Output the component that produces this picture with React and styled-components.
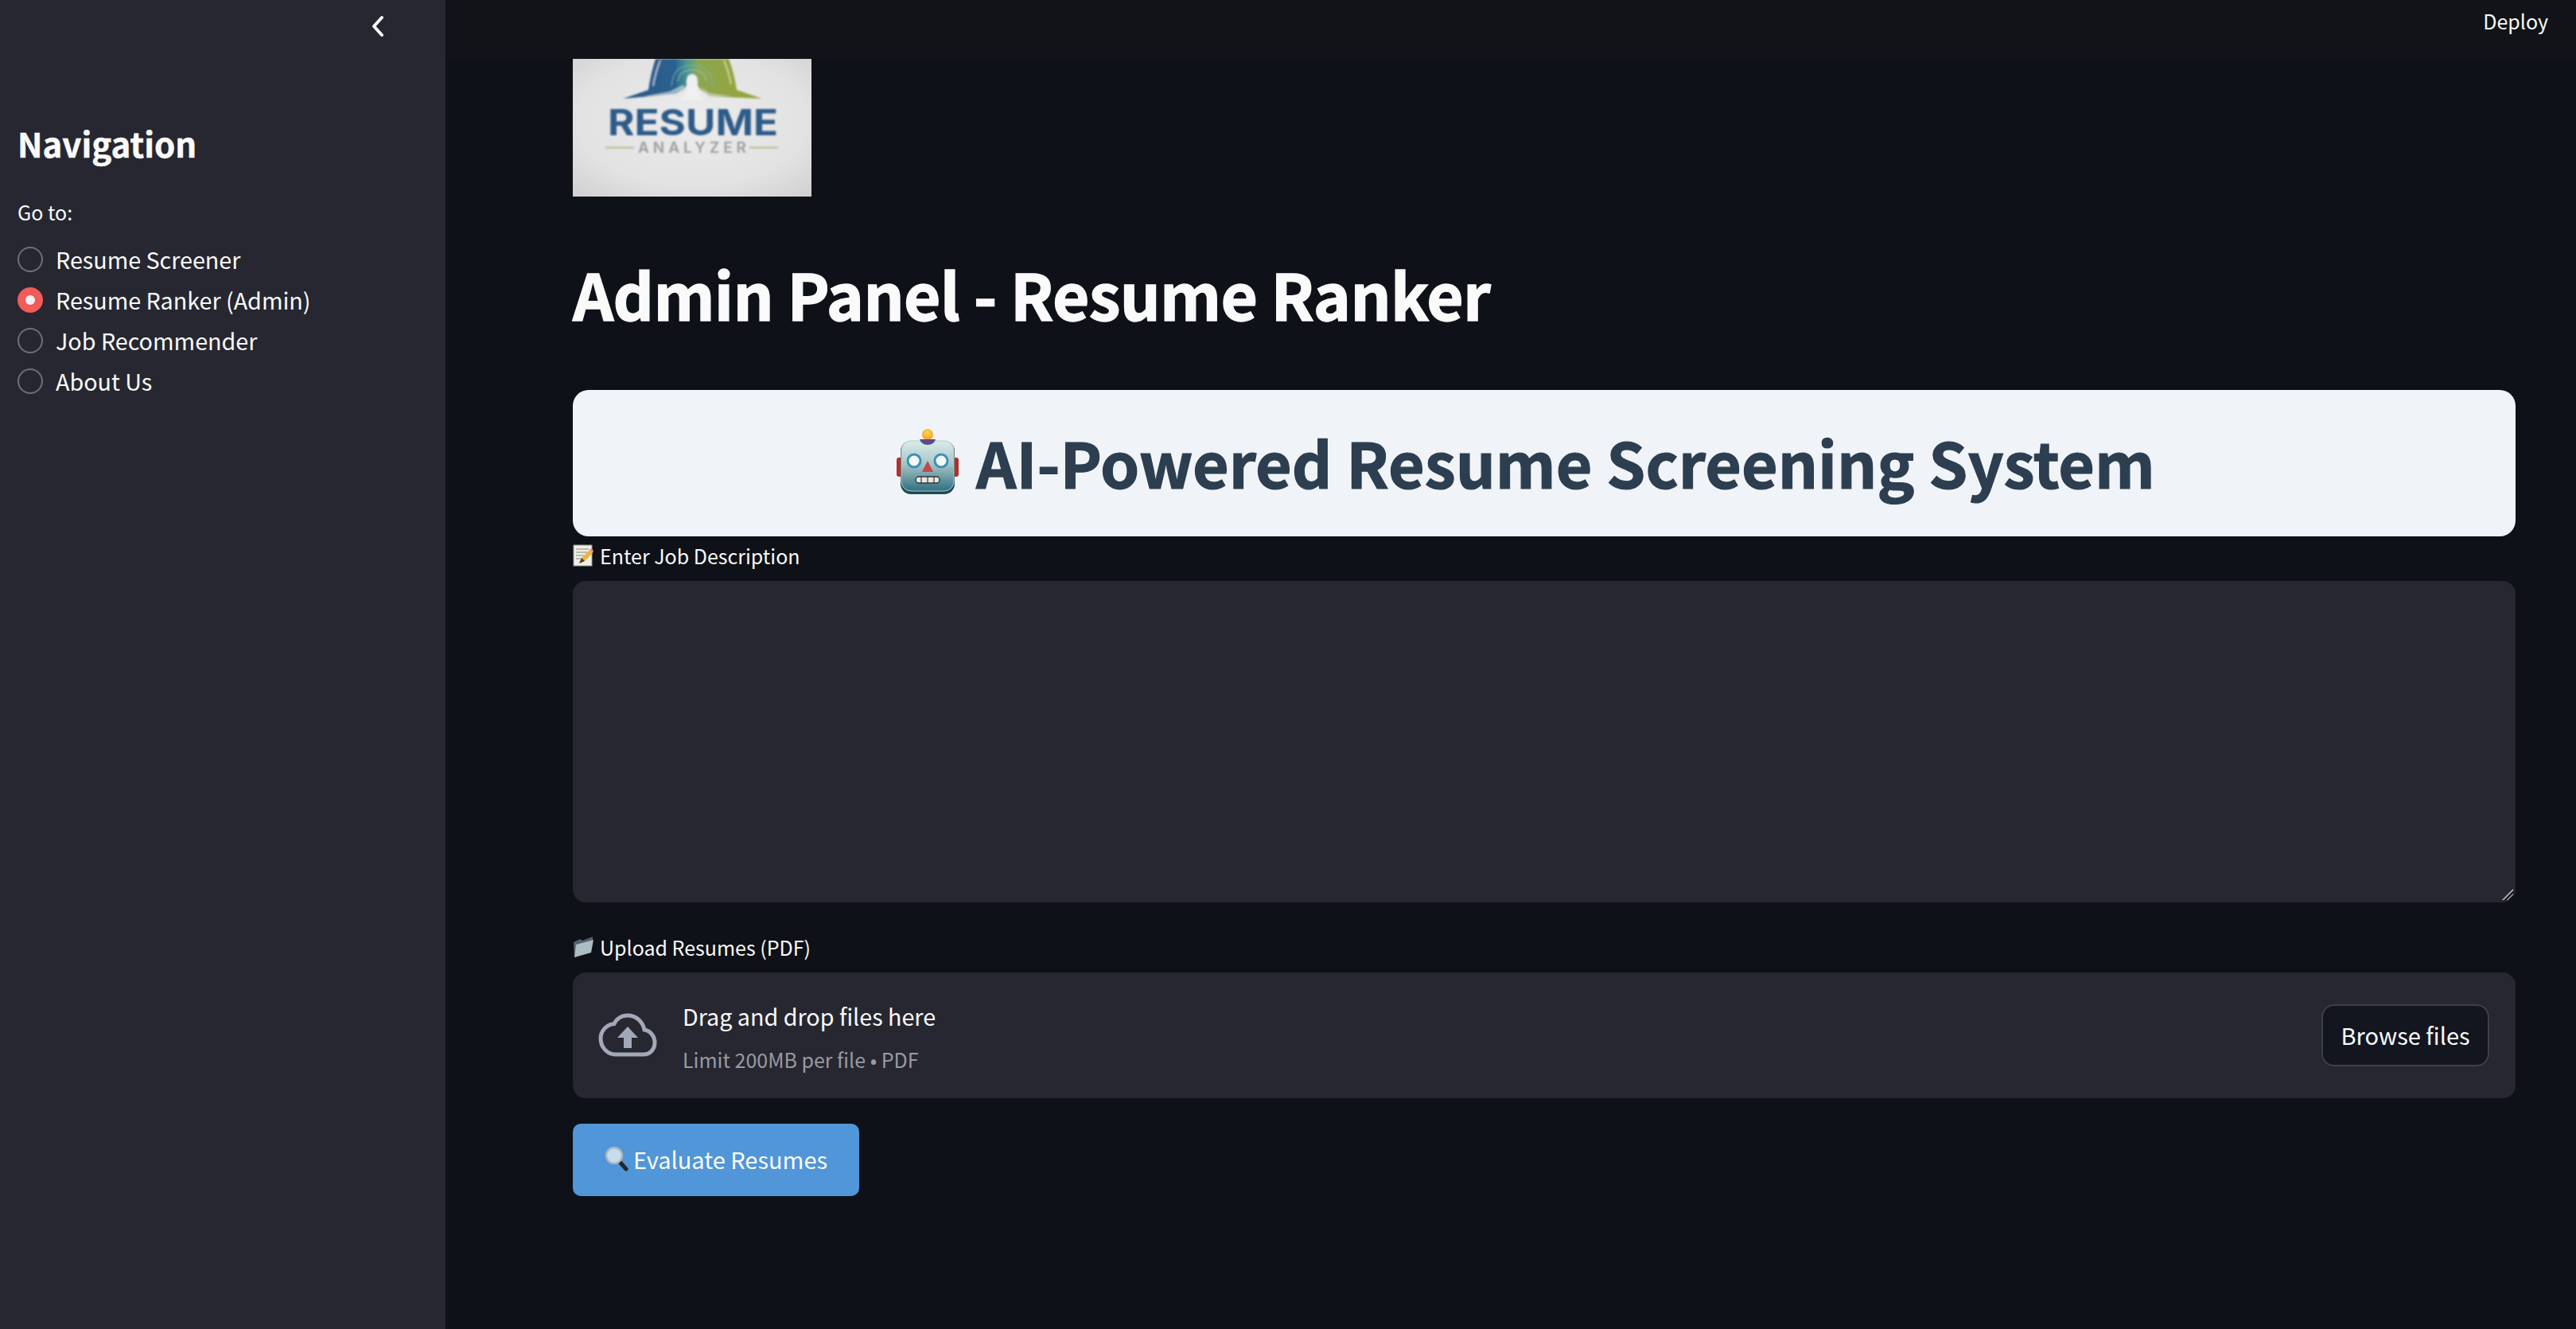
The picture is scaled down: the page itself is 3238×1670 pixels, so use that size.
import React from 'react';
import styled, { createGlobalStyle } from 'styled-components';

const GlobalStyle = createGlobalStyle`
  html, body {
    margin: 0;
    padding: 0;
    background-color: #0e1117;
    overflow: hidden;
  }
  * {
    box-sizing: border-box;
  }
`;

const FONT = `"Noto Sans CJK JP", "Noto Sans", "Liberation Sans", sans-serif`;

const Page = styled.div`
  display: flex;
  width: 3238px;
  height: 1670px;
  font-family: ${FONT};
  color: #fafafa;
  background-color: #0e1117;
`;

const Sidebar = styled.aside`
  flex: 0 0 560px;
  padding: 0 22px;
  background-color: #262730;
`;

const CollapseRow = styled.div`
  display: flex;
  justify-content: flex-end;
  align-items: center;
  height: 66px;
  padding-right: 53px;
`;

const NavTitle = styled.h2`
  margin: 84px 0 0;
  font-size: 42px;
  line-height: 60px;
  font-weight: 700;
  -webkit-text-stroke: 0.5px #fafafa;
`;

const GoTo = styled.div`
  margin-top: 38px;
  font-size: 25px;
  line-height: 36px;
`;

const RadioList = styled.div`
  margin-top: 16px;
  display: flex;
  flex-direction: column;
`;

const RadioRow = styled.div`
  display: flex;
  align-items: center;
  height: 51px;
  gap: 16px;
  font-size: 28.7px;
`;

const RadioDot = styled.span`
  flex: 0 0 32px;
  height: 32px;
  border-radius: 50%;
  display: flex;
  align-items: center;
  justify-content: center;
  background-color: ${p => (p.$checked ? '#f15b58' : '#262730')};
  border: ${p => (p.$checked ? 'none' : '2px solid #6f7076')};
  &::after {
    content: '';
    display: ${p => (p.$checked ? 'block' : 'none')};
    width: 12px;
    height: 12px;
    border-radius: 50%;
    background-color: #f0f1f5;
  }
`;

const Main = styled.main`
  flex: 1;
  padding: 0 76px 0 160px;
`;

const TopBar = styled.header`
  display: flex;
  justify-content: flex-end;
  align-items: center;
  height: 74px;
  margin: 0 -76px 0 -160px;
  padding: 0 35px 22px 0;
  font-size: 25px;
  background-color: #111318;
`;

const Deploy = styled.span`
  line-height: 40px;
`;

const LogoFrame = styled.div`
  width: 300px;
  height: 173px;
  overflow: hidden;
  svg {
    display: block;
  }
`;

const Title = styled.h1`
  margin: 61px 0 0;
  font-size: 80px;
  line-height: 120px;
  font-weight: 700;
  letter-spacing: -0.7px;
  -webkit-text-stroke: 1.4px #fafafa;
`;

const Banner = styled.div`
  display: flex;
  justify-content: center;
  align-items: center;
  gap: 22px;
  height: 184px;
  margin-top: 62px;
  padding: 0 46px 4px 0;
  border-radius: 20px;
  background-color: #f0f4f8;
`;

const BannerText = styled.h2`
  margin: 0;
  font-size: 78.7px;
  line-height: 96px;
  font-weight: 700;
  color: #2c3e50;
  -webkit-text-stroke: 1.2px #2c3e50;
`;

const FieldLabel = styled.label`
  display: flex;
  align-items: center;
  gap: ${p => p.$gap}px;
  height: 40px;
  margin-top: ${p => p.$top}px;
  font-size: 25px;
`;

const InputWrap = styled.div`
  position: relative;
  margin-top: 12px;
  &::after {
    content: '';
    position: absolute;
    right: 3px;
    bottom: 3px;
    width: 14px;
    height: 14px;
    background: linear-gradient(
      135deg,
      transparent 0 48%,
      #9a9ba1 48% 58%,
      #14161c 58% 70%,
      #9a9ba1 70% 76%,
      #14161c 76% 88%,
      transparent 88%
    );
  }
`;

const JobInput = styled.textarea`
  display: block;
  width: 100%;
  height: 404px;
  padding: 16px 24px;
  border: none;
  outline: none;
  border-radius: 16px;
  resize: none;
  font-family: inherit;
  font-size: 29px;
  color: #fafafa;
  background-color: #262730;
`;

const DropZone = styled.div`
  display: flex;
  align-items: center;
  height: 158px;
  margin-top: 12px;
  padding: 0 33px 0 32px;
  border-radius: 16px;
  background-color: #262730;
`;

const DropText = styled.div`
  display: flex;
  flex-direction: column;
  margin-left: 32px;
  padding-top: 6px;
`;

const DropTitle = styled.div`
  font-size: 28.7px;
  line-height: 48px;
`;

const DropHint = styled.div`
  margin-top: 6px;
  font-size: 25px;
  line-height: 48px;
  color: #9a9ba1;
`;

const BrowseButton = styled.button`
  margin-left: auto;
  width: 211px;
  height: 78px;
  padding: 0 0 3px;
  border: 2px solid #3d3f4a;
  border-radius: 16px;
  font-family: inherit;
  font-size: 29px;
  color: #fafafa;
  background-color: #13161f;
`;

const EvaluateButton = styled.button`
  display: flex;
  align-items: center;
  justify-content: center;
  gap: 6px;
  width: 360px;
  height: 91px;
  margin-top: 32px;
  padding: 0 0 3px;
  border: none;
  border-radius: 10px;
  font-family: inherit;
  font-size: 29px;
  color: #fafafa;
  background-color: #5096d8;
`;

const ChevronLeft = () => (
  <svg width="20" height="28" viewBox="0 0 20 28" fill="none">
    <path d="M15 3 L5 14 L15 25" stroke="#fafafa" strokeWidth="4" strokeLinecap="round" strokeLinejoin="round" />
  </svg>
);

const Logo = () => (
  <svg width="300" height="173" viewBox="0 0 300 173">
    <defs>
      <radialGradient id="paper" cx="50%" cy="45%" r="75%">
        <stop offset="0%" stopColor="#ececec" />
        <stop offset="65%" stopColor="#e2e2e2" />
        <stop offset="100%" stopColor="#cfcfcf" />
      </radialGradient>
      <linearGradient id="hat" gradientUnits="userSpaceOnUse" x1="95" y1="0" x2="207" y2="0">
        <stop offset="0%" stopColor="#2a5b8b" />
        <stop offset="30%" stopColor="#2c6190" />
        <stop offset="44%" stopColor="#4c9a92" />
        <stop offset="56%" stopColor="#8ca650" />
        <stop offset="100%" stopColor="#94a540" />
      </linearGradient>
      <filter id="soft">
        <feGaussianBlur stdDeviation="0.8" />
      </filter>
    </defs>
    <rect width="300" height="173" fill="url(#paper)" />
    <g filter="url(#soft)">
      <path d="M104 0 H196 Q203 18 206 39 L238 50 L172 47 L160 38 L152 26 H148 L140 38 L130 44 L63 50 L95 39 Q98 18 104 0 Z" fill="url(#hat)" />
      <path d="M124 34 Q126 8 150 8 Q174 8 176 34" stroke="#7dbcae" strokeWidth="1.5" fill="none" opacity="0.55" />
      <path d="M132 28 Q134 14 150 14 Q166 14 168 28" stroke="#a3cfc4" strokeWidth="1.5" fill="none" opacity="0.55" />
      <path d="M134 52 Q146 42 143 30 Q143 19 150 19 Q157 19 157 30 Q154 42 166 52 Z" fill="#eff0f0" />
      <path d="M90 47 L122 41 L138 33 L142 36 L132 46 Z" fill="#e4e9ec" opacity="0.6" />
      <path d="M160 35 L172 43 L200 47 L170 47 Z" fill="#e4e9ec" opacity="0.5" />
      <path d="M110 2 Q104 16 101 34" stroke="#c4d6e2" strokeWidth="2" fill="none" opacity="0.8" />
      <path d="M190 2 Q196 16 199 32" stroke="#dbe2b8" strokeWidth="2" fill="none" opacity="0.7" />
      <text x="44" y="96" fontFamily="Inter, Liberation Sans, sans-serif" fontWeight="700" fontSize="45" fill="#2f5b88" textLength="214" lengthAdjust="spacingAndGlyphs">RESUME</text>
      <text x="82" y="118" fontFamily="Inter, Liberation Sans, sans-serif" fontWeight="600" fontSize="19" fill="#9c9ea0" textLength="136" lengthAdjust="spacing">ANALYZER</text>
      <rect x="41" y="110" width="36" height="3" fill="#c3c8a6" />
      <rect x="222" y="110" width="36" height="3" fill="#c3c8a6" />
    </g>
  </svg>
);

const RobotEmoji = () => (
  <svg width="78" height="82" viewBox="0 0 78 82">
    <defs>
      <linearGradient id="robotFace" x1="0" y1="0" x2="0" y2="1">
        <stop offset="0%" stopColor="#d9ece9" />
        <stop offset="45%" stopColor="#a9c7c8" />
        <stop offset="100%" stopColor="#2f6f82" />
      </linearGradient>
      <radialGradient id="robotBulb" cx="50%" cy="35%" r="65%">
        <stop offset="0%" stopColor="#ffd84f" />
        <stop offset="100%" stopColor="#f59a23" />
      </radialGradient>
    </defs>
    <rect x="0" y="36" width="8" height="24" rx="3" fill="#b3302a" />
    <rect x="70" y="36" width="8" height="24" rx="3" fill="#b3302a" />
    <rect x="5" y="15" width="68" height="67" rx="13" fill="#1c4a58" />
    <rect x="6" y="15" width="66" height="63" rx="12" fill="url(#robotFace)" stroke="#b7cbc7" strokeWidth="1" />
    <circle cx="39" cy="7" r="7" fill="url(#robotBulb)" />
    <path d="M29 13 H49 Q47 20 39 20 Q31 20 29 13 Z" fill="#5d4a86" />
    <circle cx="22" cy="40" r="8" fill="#f3f9fb" stroke="#3d90b8" strokeWidth="3" />
    <circle cx="56" cy="40" r="8" fill="#f3f9fb" stroke="#3d90b8" strokeWidth="3" />
    <path d="M39 40 L46 54 H32 Z" fill="#c04a4d" />
    <rect x="24" y="60" width="30" height="8" rx="4" fill="#e6e6e0" stroke="#33393d" strokeWidth="1.5" />
    <path d="M31 60 V68 M39 60 V68 M47 60 V68" stroke="#33393d" strokeWidth="1.2" />
  </svg>
);

const MemoEmoji = () => (
  <svg width="26" height="28" viewBox="0 0 26 28">
    <rect x="1" y="1" width="23" height="26" fill="#efefe8" stroke="#9a9a94" strokeWidth="1" />
    <path d="M4 6 H20 M4 10 H18 M4 14 H14 M4 18 H10" stroke="#85857f" strokeWidth="1" />
    <path d="M8 24 L11 17 L21 7 L25 11 L15 21 Z" fill="#eeb53c" />
    <path d="M21 7 L23 5 L26 8 L25 11 Z" fill="#e58e8a" />
    <path d="M8 24 L11 17 L15 21 Z" fill="#4a4036" />
  </svg>
);

const FolderEmoji = () => (
  <svg width="26" height="28" viewBox="0 0 26 28">
    <path d="M1 8 L9 4 L12 6 L25 1 V8 L4 14 L2 27 Z" fill="#55626b" />
    <path d="M4 11 L26 5 L23 21 L2 27 Z" fill="#aebcc4" />
  </svg>
);

const SearchEmoji = () => (
  <svg width="30" height="32" viewBox="0 0 30 32">
    <path d="M19 20 L27 29" stroke="#23272b" strokeWidth="5" strokeLinecap="round" />
    <circle cx="12" cy="12" r="10" fill="#c6dcef" stroke="#adb4b9" strokeWidth="2.4" />
  </svg>
);

const CloudUpload = () => (
  <svg width="74" height="56" viewBox="0 0 74 56" fill="none">
    <path d="M58 21 C55.5 9 46 3 37 3 C29.5 3 23 7 20 13.5 C10 14.5 3 22.5 3 32 C3 43 11.5 52 22 52 H57 C65 52 71 45.5 71 37 C71 29 65 22 58 21 Z" stroke="#a3a8b8" strokeWidth="5" />
    <path d="M37 17 L50 31 H42 V44 H32 V31 H24 Z" fill="#a3a8b8" />
  </svg>
);

const NAV_ITEMS = [
  { label: 'Resume Screener' },
  { label: 'Resume Ranker (Admin)', checked: true },
  { label: 'Job Recommender' },
  { label: 'About Us' },
];

export default function App() {
  return (
    <Page>
      <GlobalStyle />
      <Sidebar>
        <CollapseRow>
          <ChevronLeft />
        </CollapseRow>
        <NavTitle>Navigation</NavTitle>
        <GoTo>Go to:</GoTo>
        <RadioList>
          {NAV_ITEMS.map(item => (
            <RadioRow key={item.label}>
              <RadioDot $checked={item.checked} />
              {item.label}
            </RadioRow>
          ))}
        </RadioList>
      </Sidebar>
      <Main>
        <TopBar>
          <Deploy>Deploy</Deploy>
        </TopBar>
        <LogoFrame>
          <Logo />
        </LogoFrame>
        <Title>Admin Panel - Resume Ranker</Title>
        <Banner>
          <RobotEmoji />
          <BannerText>AI-Powered Resume Screening System</BannerText>
        </Banner>
        <FieldLabel $top={4} $gap={8}>
          <MemoEmoji />
          Enter Job Description
        </FieldLabel>
        <InputWrap>
          <JobInput />
        </InputWrap>
        <FieldLabel $top={36} $gap={8}>
          <FolderEmoji />
          Upload Resumes (PDF)
        </FieldLabel>
        <DropZone>
          <CloudUpload />
          <DropText>
            <DropTitle>Drag and drop files here</DropTitle>
            <DropHint>Limit 200MB per file • PDF</DropHint>
          </DropText>
          <BrowseButton>Browse files</BrowseButton>
        </DropZone>
        <EvaluateButton>
          <SearchEmoji />
          Evaluate Resumes
        </EvaluateButton>
      </Main>
    </Page>
  );
}
